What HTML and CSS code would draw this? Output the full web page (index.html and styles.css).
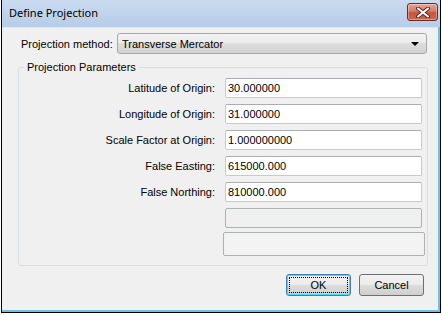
FILE: index.html
```html
<!DOCTYPE html>
<html lang="en">
<head>
  <meta charset="UTF-8" />
  <title>Define Projection</title>
  <link rel="stylesheet" href="styles.css">
</head>
<body>
  <div class="window">
    <div class="titlebar">
      <span class="title">Define Projection</span>
      <button class="close" title="Close">
        <svg width="16" height="11" viewBox="0 0 16 11">
          <path d="M3 1.5 L13 9.5 M13 1.5 L3 9.5" stroke="#5a2a22" stroke-width="4" stroke-linecap="round" />
          <path d="M3 1.5 L13 9.5 M13 1.5 L3 9.5" stroke="#ffffff" stroke-width="2" stroke-linecap="round" />
        </svg>
      </button>
    </div>

    <div class="client">
      <div class="method">
        <label class="method-label">Projection method:</label>
        <div class="combo">
          <span>Transverse Mercator</span>
          <span class="arrow"></span>
        </div>
      </div>

      <div class="group">
        <span class="legend">Projection Parameters</span>
        <div class="params">
          <label>Latitude of Origin:</label>
          <input type="text" value="30.000000">
          <label>Longitude of Origin:</label>
          <input type="text" value="31.000000">
          <label>Scale Factor at Origin:</label>
          <input type="text" value="1.000000000">
          <label>False Easting:</label>
          <input type="text" value="615000.000">
          <label>False Northing:</label>
          <input type="text" value="810000.000">
          <span></span>
          <div class="box disabled"></div>
          <span></span>
          <div class="box wide"></div>
        </div>
      </div>

      <div class="actions">
        <button class="btn default"><span>OK</span></button>
        <button class="btn">Cancel</button>
      </div>
    </div>
  </div>
</body>
</html>
```

FILE: styles.css
```css
body {
  margin: 0;
  background: #ffffff;
  font-family: 'Liberation Sans', Arial, sans-serif;
  font-size: 11px;
  color: #000;
}
.window {
  margin-left: 1px;
  width: 440px;
  height: 313px;
  box-sizing: border-box;
  border: 1px solid #000;
  border-top: none;
  background: linear-gradient(#c9daf0, #b9cfea 27px, #6fbfe6 27px);
  padding: 0 2px 2px 0;
  display: flex;
  flex-direction: column;
}
.titlebar {
  height: 27px;
  display: flex;
  align-items: center;
  justify-content: space-between;
  padding-left: 7px;
  background: linear-gradient(#cadbf0, #b6cce8);
}
.title {
  font-family: 'Noto Sans', 'Open Sans', sans-serif;
  font-size: 11px;
  color: #000;
  margin-top: -2px;
}
.close {
  width: 31px;
  height: 18px;
  margin: -3px 0 0 0;
  padding: 0;
  border: 1px solid #6a2b20;
  border-radius: 3px;
  background: linear-gradient(#e8a796, #d67a64 45%, #c4543d 55%, #c96a52);
  display: flex;
  align-items: center;
  justify-content: center;
  box-shadow: inset 0 0 0 1px rgba(255, 255, 255, 0.35);
}
.client {
  flex: 1;
  background: #f0f0f0;
  border-top: 1px solid #dfe8f3;
  padding: 5px 0 0 0;
}
.method {
  display: flex;
  align-items: center;
  height: 21px;
}
.method-label {
  flex-shrink: 0;
  width: 115px;
  padding-left: 19px;
  box-sizing: border-box;
  white-space: nowrap;
}
.combo {
  flex-shrink: 0;
  width: 310px;
  height: 21px;
  box-sizing: border-box;
  border: 1px solid #a8a8a8;
  border-radius: 3px;
  background: linear-gradient(#f3f3f3, #ebebeb 50%, #dddddd 50%, #d2d2d2);
  display: flex;
  align-items: center;
  justify-content: space-between;
  padding: 0 7px 0 4px;
}
.arrow {
  width: 0;
  height: 0;
  border-left: 4px solid transparent;
  border-right: 4px solid transparent;
  border-top: 4px solid #000;
}
.group {
  position: relative;
  margin: 13px 0 0 16px;
  width: 410px;
  box-sizing: border-box;
  border: 1px solid #d5dfe5;
  border-radius: 3px;
  padding: 10px 0 9px 0;
}
.legend {
  position: absolute;
  top: -7px;
  left: 5px;
  padding: 0 3px;
  background: #f0f0f0;
  line-height: 13px;
}
.params {
  display: grid;
  grid-template-columns: 196px 197px;
  column-gap: 10px;
  row-gap: 6px;
  align-items: center;
}
.params label {
  text-align: right;
}
.params input {
  height: 20px;
  box-sizing: border-box;
  border: 1px solid #c5cad2;
  border-top-color: #abadb3;
  border-radius: 2px;
  background: #fff;
  font-family: 'Liberation Sans', Arial, sans-serif;
  font-size: 11px;
  padding: 0 2px;
  margin: 0;
  outline: none;
}
.box {
  box-sizing: border-box;
  border: 1px solid #adb2b5;
  border-radius: 2px;
}
.disabled {
  height: 20px;
  background: #f0f0f0;
}
.wide {
  height: 24px;
  width: 202px;
  margin: -2px 0 0 -2px;
  background: #f3f3f3;
}
.actions {
  display: flex;
  justify-content: flex-end;
  gap: 8px;
  margin: 8px 14px 0 0;
}
.btn {
  width: 65px;
  height: 22px;
  box-sizing: border-box;
  border: 1px solid #707070;
  border-radius: 3px;
  background: linear-gradient(#f2f2f2, #ebebeb 50%, #dddddd 50%, #cfcfcf);
  font-family: 'Liberation Sans', Arial, sans-serif;
  font-size: 11px;
  color: #000;
  padding: 0;
}
.btn.default {
  border-color: #3c7fb1;
  box-shadow: inset 0 0 0 1px #48d8f8;
  padding: 2px;
}
.btn.default span {
  display: flex;
  align-items: center;
  justify-content: center;
  height: 100%;
  border: 1px dotted #000;
  box-sizing: border-box;
}
```
